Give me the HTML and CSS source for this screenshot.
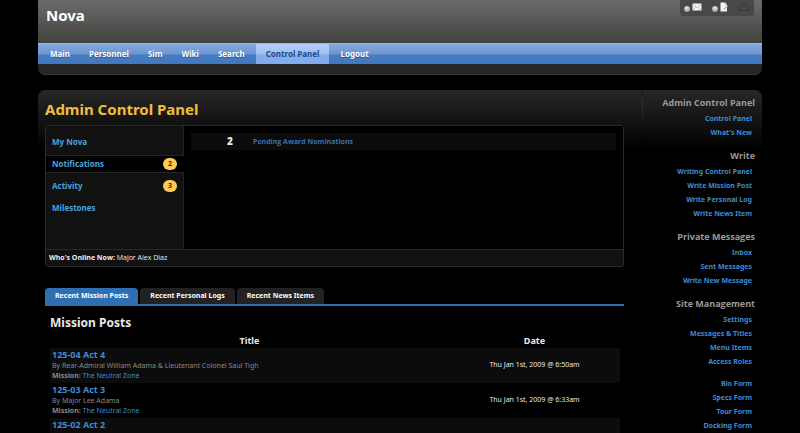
FILE: index.html
```html
<!DOCTYPE html>
<html lang="en">
<head>
<meta charset="utf-8">
<title>Nova</title>
<link rel="stylesheet" href="styles.css">
</head>
<body>
<header class="header">
  <div class="masthead">
    <div class="brand">Nova</div>
    <div class="user-panel">
      <a class="status" href="#" aria-label="Messages">
        <span class="dot"></span>
        <svg width="10" height="8" viewBox="0 0 10 8"><rect x=".5" y=".5" width="9" height="7" rx=".6" fill="#f1f5f1"/><path d="M1 1.5 5 4.8 9 1.5M1 7l2.6-3M9 7 6.400 4" fill="none" stroke="#a9b8ac" stroke-width=".7"/></svg>
      </a>
      <a class="status" href="#" aria-label="Writing">
        <span class="dot"></span>
        <svg width="8" height="10" viewBox="0 0 8 10"><path d="M.5.5h4.700L7 2.500v7H.5z" fill="#f4f4f2"/><path d="M5 .5v2.200h2" fill="none" stroke="#aaa" stroke-width=".6"/><path d="m3.500 7.800.4-1.500L7 3.500l1 1-3 3z" fill="#bdbdb8"/></svg>
      </a>
      <a class="status" href="#" aria-label="Dashboard">
        <svg width="12" height="8" viewBox="0 0 12 8"><path d="M1 7V5.200a5 4.200 0 0 1 10 0V7z" fill="#515151" stroke="#2c2c2c" stroke-width=".9"/><path d="M3.500 5.500a2.500 2.200 0 0 1 5 0" fill="none" stroke="#2b2b2b"/></svg>
      </a>
    </div>
  </div>
  <nav class="main-nav" aria-label="Main">
    <a href="#">Main</a><a href="#">Personnel</a><a href="#">Sim</a><a href="#">Wiki</a><a href="#">Search</a><a class="current" href="#">Control Panel</a><a href="#">Logout</a>
  </nav>
</header>

<div class="body-panel">
  <main class="content">
    <h1>Admin Control Panel</h1>

    <section class="dashboard">
      <div class="dash-body">
        <nav class="dash-nav" aria-label="Dashboard">
          <a href="#">My Nova</a>
          <a class="current" href="#">Notifications <span class="badge">2</span></a>
          <a href="#">Activity <span class="badge">3</span></a>
          <a href="#">Milestones</a>
        </nav>
        <div class="dash-main">
          <div class="notice"><strong>2</strong><a href="#">Pending Award Nominations</a></div>
        </div>
      </div>
      <div class="online"><strong>Who's Online Now:</strong> Major Alex Diaz</div>
    </section>

    <div class="tabs" role="tablist">
      <button type="button" role="tab" class="tab current" aria-selected="true">Recent Mission Posts</button>
      <button type="button" role="tab" class="tab" aria-selected="false">Recent Personal Logs</button>
      <button type="button" role="tab" class="tab" aria-selected="false">Recent News Items</button>
    </div>

    <section class="posts">
      <h2>Mission Posts</h2>
      <table>
        <thead><tr><th class="title-col">Title</th><th>Date</th></tr></thead>
        <tbody>
          <tr>
            <td><a class="post" href="#">125-04 Act 4</a><div class="meta">By Rear-Admiral William Adama &amp; Lieutenant Colonel Saul Tigh</div><div class="meta"><strong>Mission:</strong> <a href="#">The Neutral Zone</a></div></td>
            <td class="date">Thu Jan 1st, 2009 @ 6:50am</td>
          </tr>
          <tr>
            <td><a class="post" href="#">125-03 Act 3</a><div class="meta">By Major Lee Adama</div><div class="meta"><strong>Mission:</strong> <a href="#">The Neutral Zone</a></div></td>
            <td class="date">Thu Jan 1st, 2009 @ 6:33am</td>
          </tr>
          <tr>
            <td><a class="post" href="#">125-02 Act 2</a></td>
            <td></td>
          </tr>
        </tbody>
      </table>
    </section>
  </main>

  <aside class="sidebar">
    <h3>Admin Control Panel</h3>
    <ul><li><a href="#">Control Panel</a></li><li><a href="#">What's New</a></li></ul>
    <h3>Write</h3>
    <ul><li><a href="#">Writing Control Panel</a></li><li><a href="#">Write Mission Post</a></li><li><a href="#">Write Personal Log</a></li><li><a href="#">Write News Item</a></li></ul>
    <h3>Private Messages</h3>
    <ul><li><a href="#">Inbox</a></li><li><a href="#">Sent Messages</a></li><li><a href="#">Write New Message</a></li></ul>
    <h3>Site Management</h3>
    <ul><li><a href="#">Settings</a></li><li><a href="#">Messages &amp; Titles</a></li><li><a href="#">Menu Items</a></li><li><a href="#">Access Roles</a></li></ul>
    <ul><li><a href="#">Bio Form</a></li><li><a href="#">Specs Form</a></li><li><a href="#">Tour Form</a></li><li><a href="#">Docking Form</a></li></ul>
  </aside>
</div>
</body>
</html>
```
FILE: styles.css
```css
* { box-sizing: border-box; }

body {
  margin: 0;
  padding: 0 38px;
  height: 100vh;
  overflow: hidden;
  background: #000;
  color: #e8e8e8;
  font: 7px/10px "Noto Sans", sans-serif;
}

a { color: #3f8bd0; text-decoration: none; }
h1, h2, h3, ul { margin: 0; padding: 0; }
ul { list-style: none; }

/* Header */
.header {
  padding-bottom: 10px;
  background: #262626;
  border-bottom: 1px solid #343434;
  border-radius: 0 0 7px 7px;
}
.masthead {
  display: flex;
  justify-content: space-between;
  height: 43px;
  padding: 0 8px;
  background: linear-gradient(#6b6b6b, #414240);
}
.brand {
  padding-top: 6px;
  color: #fff;
  font-size: 15px;
  line-height: 18px;
  font-weight: 700;
}
.user-panel {
  display: flex;
  align-items: center;
  gap: 10px;
  height: 16px;
  padding: 0 4px 2px 4px;
  background: #484848;
  border-radius: 0 0 3px 3px;
}
.status { display: flex; align-items: center; gap: 2px; }
.dot {
  width: 6px;
  height: 6px;
  margin-top: 4px;
  border-radius: 50%;
  background: radial-gradient(circle at 50% 30%, #e6e6e6, #8a8a8a);
}
.main-nav {
  display: flex;
  gap: 1px;
  height: 21px;
  padding-left: 3px;
  border-top: 1px solid #9db9e0;
  background: linear-gradient(#86a9dc, #6b96d2 50%, #477cc2 55%, #4279be);
}
.main-nav a {
  padding: 0 9px;
  color: #fff;
  font-size: 8px;
  line-height: 20px;
  font-weight: 700;
  text-shadow: 0 1px 1px #30558a;
}
.main-nav .current {
  margin: 0 1px;
  padding: 0 10px;
  color: #234a86;
  background: linear-gradient(#b5d0f8, #9cc0f4 50%, #84aeec 55%, #81abeb);
  text-shadow: none;
}

/* Page panel */
.body-panel {
  display: flex;
  margin-top: 15px;
  border-radius: 7px 7px 0 0;
  background: linear-gradient(#272727, #000 60px);
}
.content { flex: 1; padding: 9px 18px 0 7px; }
h1 {
  margin-bottom: 6px;
  color: #f0bd3e;
  font-size: 15px;
  line-height: 20px;
  font-weight: 700;
}

/* Dashboard */
.dashboard {
  border: 1px solid #292929;
  border-radius: 3px;
  background: #111;
  font-family: "Open Sans", "Noto Sans", sans-serif;
}
.dash-body { display: flex; height: 123px; }
.dash-nav { width: 138px; padding-top: 5px; border-right: 1px solid #222; }
.dash-nav a {
  display: flex;
  align-items: center;
  justify-content: space-between;
  height: 16px;
  margin-bottom: 6px;
  padding: 0 6px;
  color: #4aa3dc;
  font-size: 8px;
  font-weight: 700;
}
.dash-nav a:first-child { padding-top: 3px; height: 19px; }
.dash-nav .current {
  height: 18px;
  margin: -1px -1px 5px 0;
  padding-right: 7px;
  border: solid #242424;
  border-width: 1px 0;
  background: #000;
}
.badge {
  width: 14px;
  height: 12px;
  border-radius: 6px;
  background: #fcca55;
  color: #3a2c08;
  font-size: 7px;
  line-height: 12px;
  text-align: center;
}
.dash-main { flex: 1; padding: 7px; background: #000; }
.notice { display: flex; height: 17px; background: #0c0c0c; font-weight: 700; line-height: 17px; }
.notice strong { width: 62px; padding-left: 16px; text-align: center; font-size: 10px; }
.notice a { color: #3770b0; }
.online { height: 17px; padding-left: 3px; border-top: 1px solid #292929; line-height: 16px; color: #f0f0f0; }

/* Tabs */
.tabs { display: flex; gap: 2px; margin-top: 21px; border-bottom: 2px solid #2e6eb2; }
.tab {
  height: 16px;
  padding: 0 10px;
  border: 0;
  border-radius: 4px 4px 0 0;
  background: #222;
  color: #fff;
  font: 700 7px/16px "Noto Sans", sans-serif;
}
.tab.current { background: #2e6eb2; }

/* Posts */
.posts { padding: 9px 4px 0 5px; }
h2 { font-size: 12px; line-height: 16px; font-weight: 700; }
table { width: 100%; margin-top: 3px; border-collapse: collapse; }
th { padding: 0; font-size: 9px; line-height: 14px; }
.title-col { width: 70%; }
td { padding: 1px 2px 2px; vertical-align: top; }
tbody tr:nth-child(odd) { background: #0c0c0c; }
.post { display: block; font-size: 9px; line-height: 12px; font-weight: 700; }
.meta { color: #8a8a8a; }
.date { vertical-align: middle; text-align: center; }

/* Sidebar */
.sidebar {
  width: 120px;
  padding: 5px 7px 0 0;
  text-align: right;
  border-left: 1px solid;
  border-image: linear-gradient(#111, #333 15px, #000 50px) 1;
}
h3 {
  margin-bottom: 1px;
  color: #999;
  font: 700 9px/16px "Open Sans", "Noto Sans", sans-serif;
}
.sidebar ul { margin-bottom: 8px; padding-right: 3px; line-height: 14px; font-weight: 700; }
```
